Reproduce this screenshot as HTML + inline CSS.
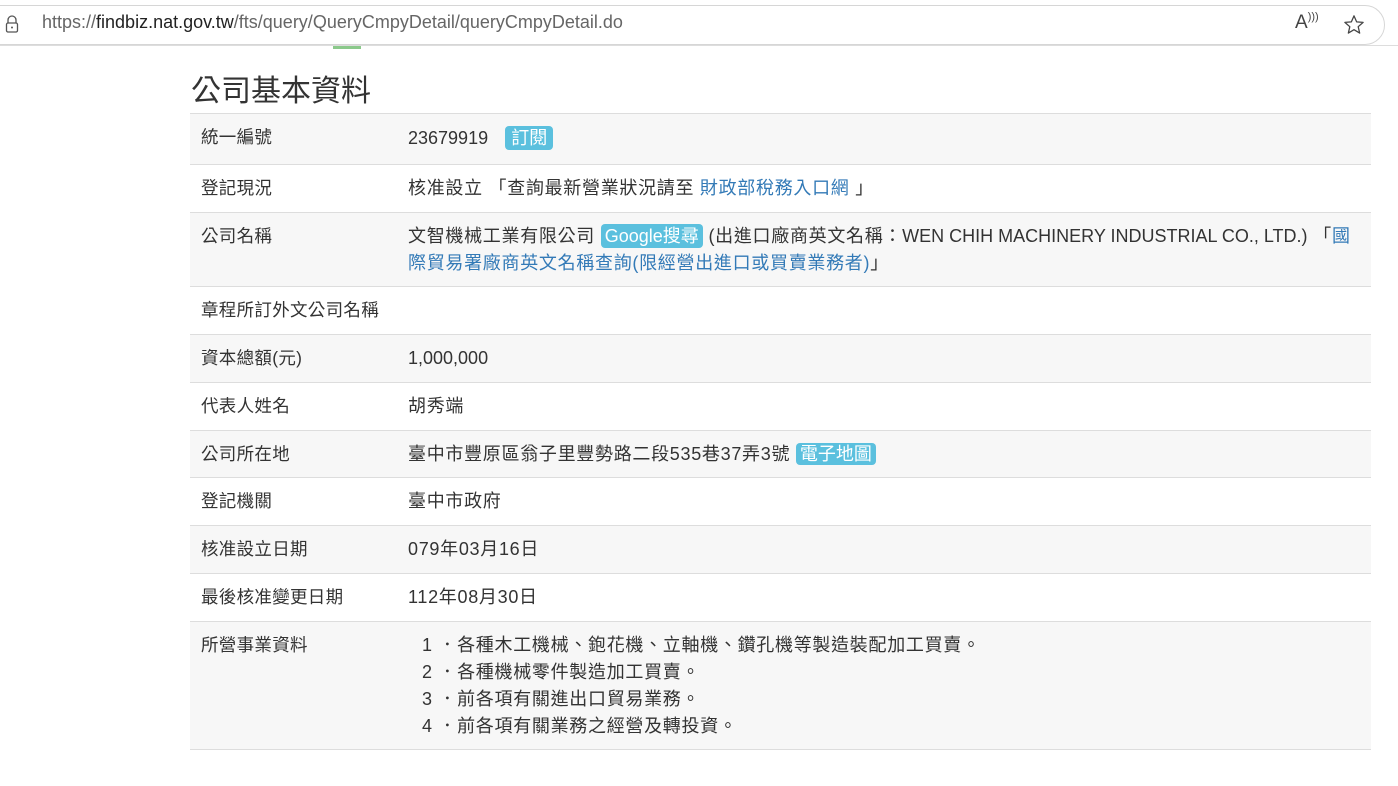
<!DOCTYPE html>
<html><head><meta charset="utf-8"><style>
*{margin:0;padding:0;box-sizing:border-box}
body{width:1398px;height:786px;background:#fff;font-family:"Liberation Sans","Noto Sans CJK TC",sans-serif;color:#333;position:relative;overflow:hidden}
.bar{position:absolute;left:0;top:0;width:1398px;height:46px;background:#fff;border-bottom:1px solid #ddd}
.url{position:absolute;left:-20px;top:5px;width:1405px;height:40px;border:1px solid #d6d6d6;border-radius:20px}
.urltxt{position:absolute;left:42px;top:12px;font-size:18px;color:#666}
.urltxt b{font-weight:normal;color:#222}
h1{position:absolute;left:191px;top:66px;font-size:30px;font-weight:normal;color:#333}
.row{position:absolute;left:190px;width:1181px;border-top:1px solid #ddd;font-size:18px;line-height:27px}
.g{background:#f7f7f7}
.lab{position:absolute;left:11px;top:10px;font-size:17.5px;letter-spacing:0.3px}
.val{position:absolute;left:218px;top:10px;right:8px;letter-spacing:0.7px}
.btn{display:inline-block;background:#5bc0de;color:#fff;border-radius:4px;padding:0 6px;line-height:24px;letter-spacing:0}
a{color:#337ab7;text-decoration:none}
.l{letter-spacing:0}
</style></head><body>
<div class="bar"><div class="url"></div>
<svg style="position:absolute;left:5px;top:15px" width="14" height="18" viewBox="0 0 14 18"><path d="M3 8V5a4 4 0 0 1 8 0v3" fill="none" stroke="#555" stroke-width="1.3"/><rect x="1.5" y="8" width="11" height="9" rx="1.5" fill="none" stroke="#555" stroke-width="1.3"/><circle cx="7" cy="12.5" r="1" fill="#555"/></svg>
<div class="urltxt">https://<b>findbiz.nat.gov.tw</b>/fts/query/QueryCmpyDetail/queryCmpyDetail.do</div>
<div style="position:absolute;left:1295px;top:12px;font-size:19px;color:#444">A<span style="font-size:11px;position:relative;top:-8px">)))</span></div>
<svg style="position:absolute;left:1343px;top:14px" width="22" height="21" viewBox="0 0 24 23"><path d="M12 2l2.9 6.6 7.1.6-5.4 4.7 1.6 7-6.2-3.7-6.2 3.7 1.6-7L2 9.2l7.1-.6z" fill="none" stroke="#444" stroke-width="1.4" stroke-linejoin="round"/></svg>
</div>
<div style="position:absolute;left:333px;top:46px;width:28px;height:3px;background:#8bc98b"></div>
<h1>公司基本資料</h1>
<div class="row g" style="top:113px;height:51px"><div class="lab">統一編號</div><div class="val" style="top:11px"><span class="l">23679919</span> &nbsp;&nbsp;<span class="btn">訂閱</span></div></div>
<div class="row" style="top:164px;height:48px"><div class="lab">登記現況</div><div class="val">核准設立 「查詢最新營業狀況請至 <a>財政部稅務入口網</a> 」</div></div>
<div class="row g" style="top:212px;height:74px"><div class="lab">公司名稱</div><div class="val">文智機械工業有限公司 <span class="btn" style="padding:0 4px">Google搜尋</span> (出進口廠商英文名稱：<span class="l">WEN CHIH MACHINERY INDUSTRIAL CO., LTD.)</span> 「<a>國際貿易署廠商英文名稱查詢(限經營出進口或買賣業務者)</a>」</div></div>
<div class="row" style="top:286px;height:48px"><div class="lab">章程所訂外文公司名稱</div></div>
<div class="row g" style="top:334px;height:48px"><div class="lab">資本總額(元)</div><div class="val l">1,000,000</div></div>
<div class="row" style="top:382px;height:48px"><div class="lab">代表人姓名</div><div class="val">胡秀端</div></div>
<div class="row g" style="top:430px;height:47px"><div class="lab">公司所在地</div><div class="val">臺中市豐原區翁子里豐勢路二段535巷37弄3號 <span class="btn" style="padding:0 4px;line-height:22px">電子地圖</span></div></div>
<div class="row" style="top:477px;height:48px"><div class="lab">登記機關</div><div class="val">臺中市政府</div></div>
<div class="row g" style="top:525px;height:48px"><div class="lab">核准設立日期</div><div class="val">079年03月16日</div></div>
<div class="row" style="top:573px;height:48px"><div class="lab">最後核准變更日期</div><div class="val">112年08月30日</div></div>
<div class="row g" style="top:621px;height:129px;border-bottom:1px solid #ddd"><div class="lab">所營事業資料</div><div class="val" style="left:232px">1 ．各種木工機械、鉋花機、立軸機、鑽孔機等製造裝配加工買賣。<br>2 ．各種機械零件製造加工買賣。<br>3 ．前各項有關進出口貿易業務。<br>4 ．前各項有關業務之經營及轉投資。</div></div>
</body></html>
